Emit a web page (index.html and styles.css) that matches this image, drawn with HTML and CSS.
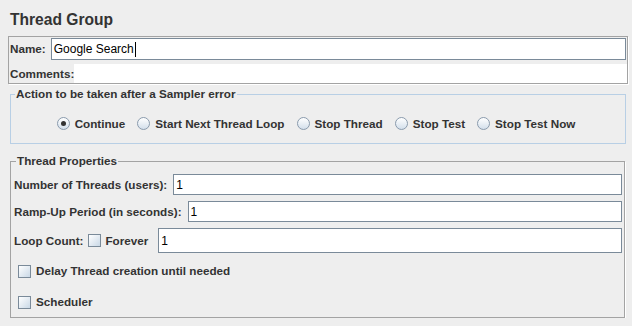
FILE: index.html
```html
<!DOCTYPE html>
<html lang="en">
<head>
    <meta charset="UTF-8">
    <meta name="viewport" content="width=device-width, initial-scale=1.0">
    <title>Thread Group</title>
    <link rel="stylesheet" href="styles.css">
</head>
<body>

    <h1 class="title">Thread Group</h1>

    <div class="name-panel">
        <div class="name-row">
            <span class="label">Name:</span>
            <div class="field">Google Search<span class="caret"></span></div>
        </div>
        <div class="comments-row">
            <span class="label">Comments:</span>
            <div class="comments-field"></div>
        </div>
    </div>

    <fieldset class="group action-group">
        <legend>Action to be taken after a Sampler error</legend>
        <div class="radio-row">
            <span class="radio-item"><span class="radio checked"></span>Continue</span>
            <span class="radio-item"><span class="radio"></span>Start Next Thread Loop</span>
            <span class="radio-item"><span class="radio"></span>Stop Thread</span>
            <span class="radio-item"><span class="radio"></span>Stop Test</span>
            <span class="radio-item"><span class="radio"></span>Stop Test Now</span>
        </div>
    </fieldset>

    <fieldset class="group props-group">
        <legend>Thread Properties</legend>
        <div class="prop-row">
            <span class="label">Number of Threads (users):</span>
            <div class="field">1</div>
        </div>
        <div class="prop-row">
            <span class="label">Ramp-Up Period (in seconds):</span>
            <div class="field">1</div>
        </div>
        <div class="prop-row loop-row">
            <span class="label">Loop Count:</span>
            <span class="check"></span>
            <span class="label forever">Forever</span>
            <div class="field">1</div>
        </div>
        <div class="check-row delay-row">
            <span class="check"></span>
            <span class="label">Delay Thread creation until needed</span>
        </div>
        <div class="check-row scheduler-row">
            <span class="check"></span>
            <span class="label">Scheduler</span>
        </div>
    </fieldset>

</body>
</html>
```

FILE: styles.css
```css
body {
    margin: 0;
    background-color: #eeeeee;
    font-family: "Liberation Sans", Arial, sans-serif;
    font-size: 11.7px;
    font-weight: bold;
    color: #333333;
}

.title {
    margin: 0;
    padding: 10px 0 0 10px;
    font-size: 15.6px;
    line-height: 19px;
}

.label {
    white-space: nowrap;
    line-height: 14px;
}

.field {
    flex: 1;
    box-sizing: border-box;
    height: 21px;
    padding-left: 2px;
    background-color: white;
    border: 1px solid #7a8a99;
    font-size: 12px;
    font-weight: normal;
    color: #000;
    display: flex;
    align-items: center;
}

.caret {
    display: inline-block;
    width: 0;
    height: 15px;
    margin-left: 1px;
    border-left: 1px solid #000;
}

/* name / comments */

.name-panel {
    margin: 7px 4px 0 8px;
    border: 1px solid #a3a3a3;
    box-shadow: 1px 1px 0 #fff;
}

.name-row {
    display: flex;
    align-items: center;
    padding: 1px 1px 0 1px;
}

.name-row .field {
    height: 22px;
    margin-left: 5px;
}

.comments-row {
    display: flex;
    align-items: center;
    margin-top: 4px;
    padding-left: 1px;
}

.comments-field {
    flex: 1;
    height: 19px;
    background-color: white;
}

/* grouped boxes */

.group {
    margin: 0;
    min-width: 0;
}

.group legend {
    padding: 0 1px;
    line-height: 14px;
}

.action-group {
    margin: 3px 6px 0 10px;
    padding: 0 4px 13px 4px;
    border: 1px solid #b8cfe5;
}

.radio-row {
    display: flex;
    justify-content: center;
    align-items: center;
    gap: 12px;
    height: 14px;
    padding-top: 15px;
    padding-right: 4px;
}

.radio-item {
    display: flex;
    align-items: center;
    gap: 5px;
    white-space: nowrap;
}

.radio {
    box-sizing: border-box;
    width: 13px;
    height: 13px;
    border-radius: 50%;
    border: 1px solid #8a9bad;
    background: linear-gradient(#ffffff, #d3dfeb);
    display: flex;
    align-items: center;
    justify-content: center;
}

.radio.checked::after {
    content: "";
    width: 5px;
    height: 5px;
    border-radius: 50%;
    background-color: #333;
}

.check {
    box-sizing: border-box;
    width: 13px;
    height: 13px;
    border: 1px solid #7a8a99;
    background: linear-gradient(135deg, #ffffff, #c9d8e6);
    flex-shrink: 0;
}

.props-group {
    margin: 10px 7px 0 10px;
    padding: 0 2px 7px 3px;
    border: 1px solid #a3a3a3;
    box-shadow: 1px 1px 0 #fff;
}

.props-group legend {
    margin-left: 2px;
}

.prop-row {
    display: flex;
    align-items: center;
    margin-top: 6px;
}

.prop-row .field {
    margin-left: 6px;
}

.loop-row .field {
    height: 25px;
    margin-left: 10px;
}

.loop-row .check {
    margin-left: 5px;
}

.forever {
    margin-left: 4px;
}

.check-row {
    display: flex;
    align-items: center;
    gap: 5px;
    height: 16px;
    padding-left: 4px;
}

.delay-row {
    margin-top: 10px;
}

.scheduler-row {
    margin-top: 15px;
}
```
